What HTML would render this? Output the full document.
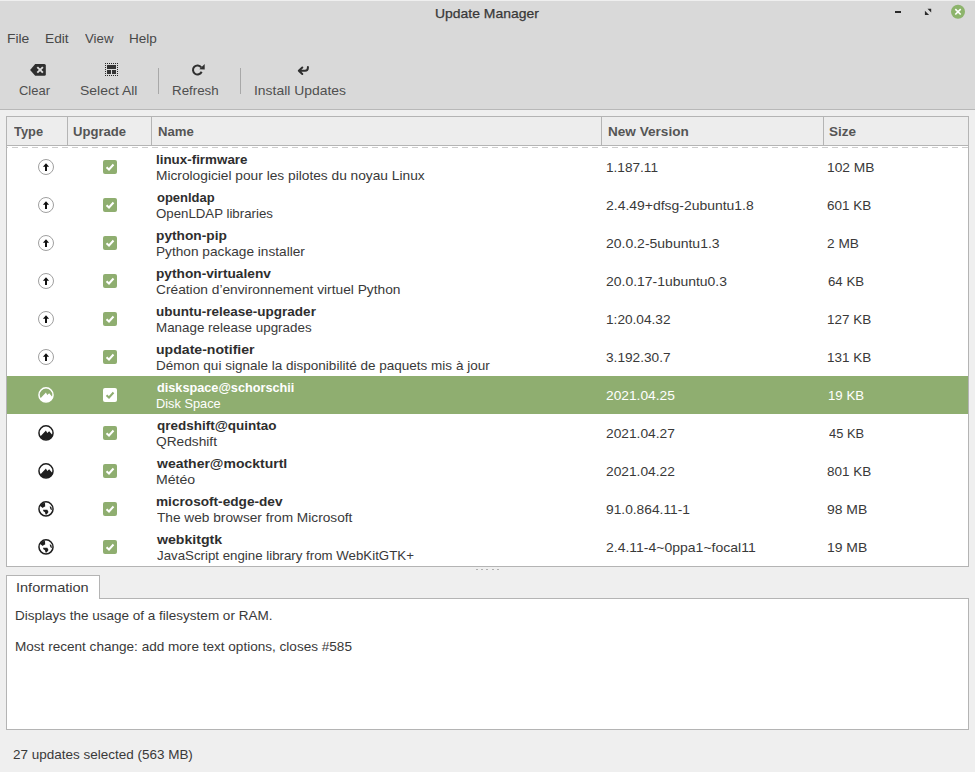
<!DOCTYPE html>
<html><head><meta charset="utf-8">
<style>
*{margin:0;padding:0;box-sizing:border-box}
html,body{width:975px;height:772px;overflow:hidden;background:#efefef}
body{position:relative;font-family:"Liberation Sans",sans-serif;font-size:13.4px;color:#333}
.a{position:absolute;white-space:nowrap;line-height:16px;height:16px;font-size:13.4px;transform-origin:0 0}
.ttl{color:#383838;font-size:13.6px;-webkit-text-stroke:0.25px #383838}
.menu{color:#484848}
.tb{color:#4f4f4f}
.h{font-weight:bold;color:#555}
.nm{font-weight:bold;color:#2e2e2e;font-size:13.3px}
.ds{color:#393939}
.vr{color:#393939}
.sel{color:#fff}
.tabt{color:#3a3a3a}
.info{color:#393939}
.status{color:#393939}

#top{position:absolute;left:0;top:0;width:975px;height:110px;background:#d9d9d9;border-bottom:1px solid #b8b8b8}
#topline{position:absolute;left:0;top:0;width:975px;height:1px;background:#efefef}
.sep{position:absolute;top:68px;width:1px;height:26px;background:#a8a8a8}
#tree{position:absolute;left:6px;top:116px;width:963px;height:451px;background:#fff;border:1px solid #b4b4b4}
#hdr{position:absolute;left:0;top:0;width:961px;height:29px;background:#ededed;border-bottom:1px solid #b4b4b4}
.hs{position:absolute;top:0;width:1px;height:29px;background:#b4b4b4}
#dash{position:absolute;left:0;top:30px;width:961px;height:1px;background:linear-gradient(90deg,#cdcdcd 0 1px,transparent 1px 5px,#cdcdcd 5px 10px);background-size:10px 1px}
.row{position:absolute;left:0;width:961px;height:38px}
.row.sel{background:#8fae70}
.cb{position:absolute;left:96px;top:12px;width:14px;height:14px;border-radius:2px;background:#8fae70}
.row.sel .cb{background:#fff}
.icw{position:absolute;left:30px;top:10px;width:18px;height:18px}
.icw svg,.cb svg,.ti svg{display:block}
.ti{position:absolute}
#tab{position:absolute;left:6px;top:575px;width:94px;height:24px;background:#fff;border:1px solid #b4b4b4;border-bottom:none}
#info{position:absolute;left:6px;top:598px;width:963px;height:132px;background:#fff;border:1px solid #b4b4b4}
#tabcover{position:absolute;left:7px;top:598px;width:92px;height:1px;background:#fff}
.dot{position:absolute;top:569px;width:2px;height:1px;background:#b0b0b0}
</style></head><body>
<div id="top"></div>
<div id="topline"></div>
<div class="sep" style="left:158px"></div>
<div class="sep" style="left:240px"></div>
<div class="ti" style="left:28px;top:62px"><svg width="20" height="16" viewBox="0 0 20 16"><path d="M2.1 8 L7.2 2 H16.3 Q17.8 2 17.8 3.5 V12.2 Q17.8 13.7 16.3 13.7 H7.2 Z" fill="#2f2f2f"/><path d="M9.3 5.1 L14.9 10.7 M14.9 5.1 L9.3 10.7" stroke="#dcdcdc" stroke-width="1.9"/></svg></div>
<div class="ti" style="left:104px;top:62px"><svg width="16" height="16" viewBox="0 0 16 16"><path d="M1 1h1v1h-1zM3 1h1v1h-1zM5 1h1v1h-1zM7 1h1v1h-1zM9 1h1v1h-1zM11 1h1v1h-1zM13 1h1v1h-1zM1 13h1v1h-1zM3 13h1v1h-1zM5 13h1v1h-1zM7 13h1v1h-1zM9 13h1v1h-1zM11 13h1v1h-1zM13 13h1v1h-1zM1 3h1v1h-1zM1 5h1v1h-1zM1 7h1v1h-1zM1 9h1v1h-1zM1 11h1v1h-1zM13 3h1v1h-1zM13 5h1v1h-1zM13 7h1v1h-1zM13 9h1v1h-1zM13 11h1v1h-1z" fill="#2a2a2a"/><path d="M3 3h9v4h-9zM3 8h4v4h-4zM8 8h4v4h-4z" fill="#333"/></svg></div>
<div class="ti" style="left:188px;top:62px"><svg width="20" height="16" viewBox="0 0 20 16"><path d="M13.64 9.76 A4.5 4.5 0 1 1 13.2 5.4" fill="none" stroke="#2f2f2f" stroke-width="2"/><path d="M11.3 7.2 L16.7 2 V7.5 Z" fill="#2f2f2f"/></svg></div>
<div class="ti" style="left:290px;top:58px"><svg width="20" height="20" viewBox="0 0 20 20"><path d="M12.3 9.5 L8.8 12.7 L12.3 16 M8.8 12.7 H15 Q17.9 12.7 17.9 9.8 V9" fill="none" stroke="#2f2f2f" stroke-width="2" stroke-linecap="round" stroke-linejoin="round"/></svg></div>
<div class="ti" style="left:895px;top:11px;width:6px;height:2px;background:#2a2a2a"></div>
<div class="ti" style="left:924px;top:8px"><svg width="8" height="8" viewBox="0 0 8 8"><path d="M3.5 0.8 H7.2 V4.5 Z M0.9 2.7 V6.9 H5.1 Z" fill="#2a2a2a"/></svg></div>
<div class="ti" style="left:950px;top:4px"><svg width="16" height="16" viewBox="0 0 16 16"><circle cx="8" cy="7.8" r="7" fill="#8db46c"/><path d="M5.3 5.1 L10.7 10.5 M10.7 5.1 L5.3 10.5" stroke="#fff" stroke-width="1.6"/></svg></div>

<div id="tree">
 <div id="hdr">
  <div class="hs" style="left:60px"></div>
  <div class="hs" style="left:144px"></div>
  <div class="hs" style="left:594px"></div>
  <div class="hs" style="left:816px"></div>
 </div>
 <div id="dash"></div>
 <div class="row" style="top:31px"><div class="icw"><svg width="18" height="18" viewBox="0 0 18 18"><circle cx="9" cy="9" r="7.5" fill="#fff" stroke="#a0a0a0" stroke-width="1"/><path d="M9 5.3 L12.1 8.8 L10 8.8 L10 12.9 L8 12.9 L8 8.8 L5.9 8.8 Z" fill="#111"/></svg></div><div class="cb"><svg width="14" height="14" viewBox="0 0 14 14"><path d="M3.5 7.2 L6 9.5 L10.5 4.5" fill="none" stroke="#fff" stroke-width="2"/></svg></div></div>
<div class="row" style="top:69px"><div class="icw"><svg width="18" height="18" viewBox="0 0 18 18"><circle cx="9" cy="9" r="7.5" fill="#fff" stroke="#a0a0a0" stroke-width="1"/><path d="M9 5.3 L12.1 8.8 L10 8.8 L10 12.9 L8 12.9 L8 8.8 L5.9 8.8 Z" fill="#111"/></svg></div><div class="cb"><svg width="14" height="14" viewBox="0 0 14 14"><path d="M3.5 7.2 L6 9.5 L10.5 4.5" fill="none" stroke="#fff" stroke-width="2"/></svg></div></div>
<div class="row" style="top:107px"><div class="icw"><svg width="18" height="18" viewBox="0 0 18 18"><circle cx="9" cy="9" r="7.5" fill="#fff" stroke="#a0a0a0" stroke-width="1"/><path d="M9 5.3 L12.1 8.8 L10 8.8 L10 12.9 L8 12.9 L8 8.8 L5.9 8.8 Z" fill="#111"/></svg></div><div class="cb"><svg width="14" height="14" viewBox="0 0 14 14"><path d="M3.5 7.2 L6 9.5 L10.5 4.5" fill="none" stroke="#fff" stroke-width="2"/></svg></div></div>
<div class="row" style="top:145px"><div class="icw"><svg width="18" height="18" viewBox="0 0 18 18"><circle cx="9" cy="9" r="7.5" fill="#fff" stroke="#a0a0a0" stroke-width="1"/><path d="M9 5.3 L12.1 8.8 L10 8.8 L10 12.9 L8 12.9 L8 8.8 L5.9 8.8 Z" fill="#111"/></svg></div><div class="cb"><svg width="14" height="14" viewBox="0 0 14 14"><path d="M3.5 7.2 L6 9.5 L10.5 4.5" fill="none" stroke="#fff" stroke-width="2"/></svg></div></div>
<div class="row" style="top:183px"><div class="icw"><svg width="18" height="18" viewBox="0 0 18 18"><circle cx="9" cy="9" r="7.5" fill="#fff" stroke="#a0a0a0" stroke-width="1"/><path d="M9 5.3 L12.1 8.8 L10 8.8 L10 12.9 L8 12.9 L8 8.8 L5.9 8.8 Z" fill="#111"/></svg></div><div class="cb"><svg width="14" height="14" viewBox="0 0 14 14"><path d="M3.5 7.2 L6 9.5 L10.5 4.5" fill="none" stroke="#fff" stroke-width="2"/></svg></div></div>
<div class="row" style="top:221px"><div class="icw"><svg width="18" height="18" viewBox="0 0 18 18"><circle cx="9" cy="9" r="7.5" fill="#fff" stroke="#a0a0a0" stroke-width="1"/><path d="M9 5.3 L12.1 8.8 L10 8.8 L10 12.9 L8 12.9 L8 8.8 L5.9 8.8 Z" fill="#111"/></svg></div><div class="cb"><svg width="14" height="14" viewBox="0 0 14 14"><path d="M3.5 7.2 L6 9.5 L10.5 4.5" fill="none" stroke="#fff" stroke-width="2"/></svg></div></div>
<div class="row sel" style="top:259px"><div class="icw"><svg width="18" height="18" viewBox="0 0 18 18"><circle cx="9" cy="8.9" r="7.05" fill="none" stroke="#fff" stroke-width="1.5"/><path d="M3.3 12.5 L8.95 6.5 L10.2 8.9 L12.2 7.3 L15.8 11.4 A7.05 7.05 0 0 1 3.3 12.5 Z" fill="#fff"/></svg></div><div class="cb"><svg width="14" height="14" viewBox="0 0 14 14"><path d="M3.5 7.2 L6 9.5 L10.5 4.5" fill="none" stroke="#8fae70" stroke-width="2"/></svg></div></div>
<div class="row" style="top:297px"><div class="icw"><svg width="18" height="18" viewBox="0 0 18 18"><circle cx="9" cy="8.9" r="7.05" fill="none" stroke="#1e1e1e" stroke-width="1.5"/><path d="M3.3 12.5 L8.95 6.5 L10.2 8.9 L12.2 7.3 L15.8 11.4 A7.05 7.05 0 0 1 3.3 12.5 Z" fill="#1e1e1e"/></svg></div><div class="cb"><svg width="14" height="14" viewBox="0 0 14 14"><path d="M3.5 7.2 L6 9.5 L10.5 4.5" fill="none" stroke="#fff" stroke-width="2"/></svg></div></div>
<div class="row" style="top:335px"><div class="icw"><svg width="18" height="18" viewBox="0 0 18 18"><circle cx="9" cy="8.9" r="7.05" fill="none" stroke="#1e1e1e" stroke-width="1.5"/><path d="M3.3 12.5 L8.95 6.5 L10.2 8.9 L12.2 7.3 L15.8 11.4 A7.05 7.05 0 0 1 3.3 12.5 Z" fill="#1e1e1e"/></svg></div><div class="cb"><svg width="14" height="14" viewBox="0 0 14 14"><path d="M3.5 7.2 L6 9.5 L10.5 4.5" fill="none" stroke="#fff" stroke-width="2"/></svg></div></div>
<div class="row" style="top:373px"><div class="icw"><svg width="18" height="18" viewBox="0 0 18 18"><circle cx="9" cy="8.9" r="7.05" fill="none" stroke="#1e1e1e" stroke-width="1.5"/><path d="M2.9 5.8 L5.2 3.3 L8.0 3.1 L8.2 6.4 L6.8 6.9 L5.8 7.9 L3.8 6.5 Z" fill="#1e1e1e"/><path d="M6.0 9.8 L10.3 9.8 L11.5 11.9 L9.7 14.5 L8.5 14.6 L8.0 12.3 L6.4 11.2 Z" fill="#1e1e1e"/><path d="M12.8 5.9 L14.6 7.6 L14.9 10.3 L13.7 9.6 L13.0 8.0 Z" fill="#1e1e1e"/></svg></div><div class="cb"><svg width="14" height="14" viewBox="0 0 14 14"><path d="M3.5 7.2 L6 9.5 L10.5 4.5" fill="none" stroke="#fff" stroke-width="2"/></svg></div></div>
<div class="row" style="top:411px"><div class="icw"><svg width="18" height="18" viewBox="0 0 18 18"><circle cx="9" cy="8.9" r="7.05" fill="none" stroke="#1e1e1e" stroke-width="1.5"/><path d="M2.9 5.8 L5.2 3.3 L8.0 3.1 L8.2 6.4 L6.8 6.9 L5.8 7.9 L3.8 6.5 Z" fill="#1e1e1e"/><path d="M6.0 9.8 L10.3 9.8 L11.5 11.9 L9.7 14.5 L8.5 14.6 L8.0 12.3 L6.4 11.2 Z" fill="#1e1e1e"/><path d="M12.8 5.9 L14.6 7.6 L14.9 10.3 L13.7 9.6 L13.0 8.0 Z" fill="#1e1e1e"/></svg></div><div class="cb"><svg width="14" height="14" viewBox="0 0 14 14"><path d="M3.5 7.2 L6 9.5 L10.5 4.5" fill="none" stroke="#fff" stroke-width="2"/></svg></div></div>
</div>
<div id="tab"></div>
<div id="info"></div>
<div id="tabcover"></div>
<div class="dot" style="left:476px"></div>
<div class="dot" style="left:481px"></div>
<div class="dot" style="left:486px"></div>
<div class="dot" style="left:492px"></div>
<div class="dot" style="left:497px"></div>
<div class="a ttl" style="left:435.48px;top:6px;transform:scaleX(1.0250)">Update Manager</div>
<div class="a menu" style="left:7.46px;top:31px;transform:scaleX(1.0350)">File</div>
<div class="a menu" style="left:44.58px;top:31px;transform:scaleX(1.0227)">Edit</div>
<div class="a menu" style="left:84.50px;top:31px;transform:scaleX(0.9897)">View</div>
<div class="a menu" style="left:128.59px;top:31px;transform:scaleX(1.0115)">Help</div>
<div class="a tb" style="left:18.53px;top:83px;transform:scaleX(0.9677)">Clear</div>
<div class="a tb" style="left:80.06px;top:83px;transform:scaleX(1.0434)">Select All</div>
<div class="a tb" style="left:172.20px;top:83px;transform:scaleX(0.9956)">Refresh</div>
<div class="a tb" style="left:253.96px;top:83px;transform:scaleX(1.0379)">Install Updates</div>
<div class="a h" style="left:13.50px;top:124px;transform:scaleX(0.9600)">Type</div>
<div class="a h" style="left:73.32px;top:124px;transform:scaleX(0.9755)">Upgrade</div>
<div class="a h" style="left:157.82px;top:124px;transform:scaleX(0.9829)">Name</div>
<div class="a h" style="left:607.59px;top:124px;transform:scaleX(1.0141)">New Version</div>
<div class="a h" style="left:829.19px;top:124px;transform:scaleX(1.0080)">Size</div>
<div class="a nm" style="left:155.99px;top:152px;transform:scaleX(1.0067)">linux-firmware</div>
<div class="a ds" style="left:155.97px;top:168px;transform:scaleX(1.0253)">Micrologiciel pour les pilotes du noyau Linux</div>
<div class="a vr" style="left:605.98px;top:160px;transform:scaleX(1.0160)">1.187.11</div>
<div class="a vr" style="left:827.47px;top:160px;transform:scaleX(1.0289)">102 MB</div>
<div class="a nm" style="left:157.00px;top:190px;transform:scaleX(0.9763)">openldap</div>
<div class="a ds" style="left:156.01px;top:206px;transform:scaleX(0.9897)">OpenLDAP libraries</div>
<div class="a vr" style="left:605.96px;top:198px;transform:scaleX(1.0411)">2.4.49+dfsg-2ubuntu1.8</div>
<div class="a vr" style="left:827.49px;top:198px;transform:scaleX(1.0071)">601 KB</div>
<div class="a nm" style="left:155.97px;top:228px;transform:scaleX(1.0313)">python-pip</div>
<div class="a ds" style="left:155.98px;top:244px;transform:scaleX(1.0207)">Python package installer</div>
<div class="a vr" style="left:605.96px;top:236px;transform:scaleX(1.0449)">20.0.2-5ubuntu1.3</div>
<div class="a vr" style="left:827.48px;top:236px;transform:scaleX(1.0200)">2 MB</div>
<div class="a nm" style="left:155.97px;top:266px;transform:scaleX(1.0297)">python-virtualenv</div>
<div class="a ds" style="left:155.97px;top:282px;transform:scaleX(1.0262)">Création d’environnement virtuel Python</div>
<div class="a vr" style="left:605.96px;top:274px;transform:scaleX(1.0417)">20.0.17-1ubuntu0.3</div>
<div class="a vr" style="left:827.51px;top:274px;transform:scaleX(0.9886)">64 KB</div>
<div class="a nm" style="left:155.98px;top:304px;transform:scaleX(1.0160)">ubuntu-release-upgrader</div>
<div class="a ds" style="left:156.00px;top:320px">Manage release upgrades</div>
<div class="a vr" style="left:605.98px;top:312px;transform:scaleX(1.0194)">1:20.04.32</div>
<div class="a vr" style="left:827.49px;top:312px;transform:scaleX(1.0071)">127 KB</div>
<div class="a nm" style="left:155.94px;top:342px;transform:scaleX(1.0587)">update-notifier</div>
<div class="a ds" style="left:155.99px;top:358px;transform:scaleX(1.0097)">Démon qui signale la disponibilité de paquets mis à jour</div>
<div class="a vr" style="left:605.98px;top:350px;transform:scaleX(1.0194)">3.192.30.7</div>
<div class="a vr" style="left:827.49px;top:350px;transform:scaleX(1.0071)">131 KB</div>
<div class="a nm sel" style="left:157.00px;top:380px;transform:scaleX(0.9552)">diskspace@schorschii</div>
<div class="a ds sel" style="left:156.05px;top:396px;transform:scaleX(0.9545)">Disk Space</div>
<div class="a vr sel" style="left:605.97px;top:388px;transform:scaleX(1.0273)">2021.04.25</div>
<div class="a vr sel" style="left:827.51px;top:388px;transform:scaleX(0.9886)">19 KB</div>
<div class="a nm" style="left:157.00px;top:418px;transform:scaleX(1.0144)">qredshift@quintao</div>
<div class="a ds" style="left:155.98px;top:434px;transform:scaleX(1.0241)">QRedshift</div>
<div class="a vr" style="left:605.97px;top:426px;transform:scaleX(1.0273)">2021.04.27</div>
<div class="a vr" style="left:828.50px;top:426px;transform:scaleX(0.9611)">45 KB</div>
<div class="a nm" style="left:157.00px;top:456px;transform:scaleX(1.0520)">weather@mockturtl</div>
<div class="a ds" style="left:155.95px;top:472px;transform:scaleX(1.0528)">Météo</div>
<div class="a vr" style="left:605.97px;top:464px;transform:scaleX(1.0273)">2021.04.22</div>
<div class="a vr" style="left:827.49px;top:464px;transform:scaleX(1.0071)">801 KB</div>
<div class="a nm" style="left:155.97px;top:494px;transform:scaleX(1.0254)">microsoft-edge-dev</div>
<div class="a ds" style="left:157.00px;top:510px;transform:scaleX(1.0215)">The web browser from Microsoft</div>
<div class="a vr" style="left:605.97px;top:502px;transform:scaleX(1.0275)">91.0.864.11-1</div>
<div class="a vr" style="left:827.46px;top:502px;transform:scaleX(1.0405)">98 MB</div>
<div class="a nm" style="left:157.00px;top:532px;transform:scaleX(1.0623)">webkitgtk</div>
<div class="a ds" style="left:157.00px;top:548px;transform:scaleX(0.9915)">JavaScript engine library from WebKitGTK+</div>
<div class="a vr" style="left:605.95px;top:540px;transform:scaleX(1.0451)">2.4.11-4~0ppa1~focal11</div>
<div class="a vr" style="left:827.46px;top:540px;transform:scaleX(1.0405)">19 MB</div>
<div class="a tabt" style="left:16.42px;top:580px;transform:scaleX(1.0846)">Information</div>
<div class="a info" style="left:14.59px;top:608px;transform:scaleX(1.0083)">Displays the usage of a filesystem or RAM.</div>
<div class="a info" style="left:14.59px;top:639px;transform:scaleX(1.0127)">Most recent change: add more text options, closes #585</div>
<div class="a status" style="left:13.49px;top:747px;transform:scaleX(1.0068)">27 updates selected (563 MB)</div>
</body></html>
